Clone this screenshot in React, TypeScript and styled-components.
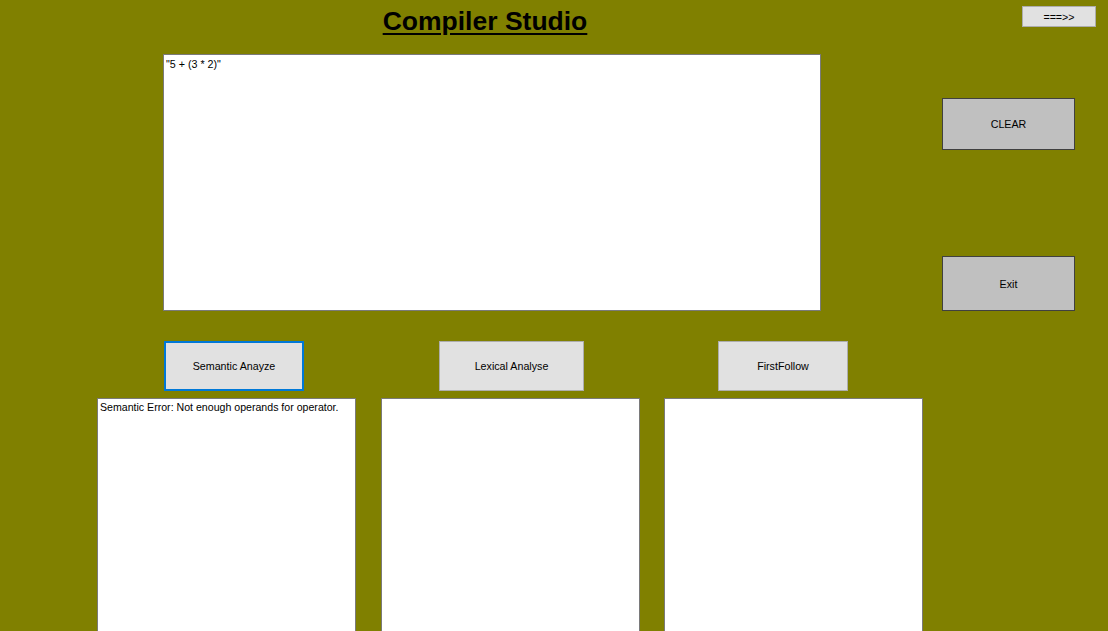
import React, { useState } from 'react';
import styled, { createGlobalStyle } from 'styled-components';

const GlobalStyle = createGlobalStyle`
  html, body {
    margin: 0;
    padding: 0;
    background: #808000;
  }
  * {
    box-sizing: border-box;
  }
`;

const Form = styled.div`
  width: 1108px;
  height: 631px;
  overflow: hidden;
  background: #808000;
  font-family: 'Liberation Sans', Arial, sans-serif;
  font-size: 11px;
  color: #000;
  display: flex;
  flex-direction: column;
  & > * {
    flex-shrink: 0;
  }
`;

const TitleBar = styled.div`
  height: 54px;
  display: flex;
  align-items: flex-start;
`;

const Title = styled.h1`
  margin: 0;
  width: 821px;
  padding: 5px 14px 0 163px;
  text-align: center;
  font-size: 26.5px;
  font-weight: bold;
  text-decoration: underline;
  text-underline-offset: 3px;
  line-height: 32px;
`;

const Spacer = styled.div`
  flex: 1;
`;

const Button = styled.button<{ $w: number; $h: number; $variant?: 'grey' | 'focus' }>`
  width: ${(p) => p.$w}px;
  height: ${(p) => p.$h}px;
  padding: 0;
  margin: 0;
  font-family: 'Liberation Sans', Arial, sans-serif;
  font-size: 10.7px;
  color: #000;
  cursor: pointer;
  background: ${(p) => (p.$variant === 'grey' ? '#c0c0c0' : '#e1e1e1')};
  border: ${(p) =>
    p.$variant === 'grey'
      ? '1px solid #404040'
      : p.$variant === 'focus'
      ? '2px solid #0078d7'
      : '1px solid #adadad'};
  &:hover {
    background: ${(p) => (p.$variant === 'grey' ? '#c8c8c8' : '#e5f1fb')};
  }
`;

const ToggleButton = styled(Button)`
  margin: 6px 12px 0 0;
`;

const EditorRow = styled.div`
  display: flex;
  padding-left: 163px;
`;

const Editor = styled.textarea`
  width: 658px;
  height: 257px;
  margin: 0;
  padding: 3px 2px;
  resize: none;
  border: 1px solid #7a7a7a;
  background: #fff;
  font-family: 'Liberation Sans', Arial, sans-serif;
  font-size: 10.7px;
  line-height: 13px;
  color: #000;
  outline: none;
`;

const SideColumn = styled.div`
  display: flex;
  flex-direction: column;
  margin-left: 121px;
  padding-top: 44px;
  gap: 106px;
`;

const ActionRow = styled.div`
  display: flex;
  margin-top: 30px;
  padding-left: 164px;
`;

const ActionSlot = styled.div<{ $gap: number }>`
  margin-left: ${(p) => p.$gap}px;
`;

const OutputRow = styled.div`
  display: flex;
  margin-top: 7px;
  padding-left: 97px;
`;

const Output = styled.div<{ $gap?: number }>`
  width: 259px;
  height: 260px;
  margin-left: ${(p) => p.$gap ?? 0}px;
  background: #fff;
  border: 1px solid #7a7a7a;
  padding: 2px 2px;
  font-size: 10.6px;
  line-height: 13px;
  white-space: pre-wrap;
`;

export default function App() {
  const [source, setSource] = useState('"5 + (3 * 2)"');
  const [semantic, setSemantic] = useState('Semantic Error: Not enough operands for operator.');
  const [lexical, setLexical] = useState('');
  const [first, setFirst] = useState('');

  const clearAll = () => {
    setSource('');
    setSemantic('');
    setLexical('');
    setFirst('');
  };

  return (
    <>
      <GlobalStyle />
      <Form>
        <TitleBar>
          <Title>Compiler Studio</Title>
          <Spacer />
          <ToggleButton $w={74} $h={21}>===&gt;&gt;</ToggleButton>
        </TitleBar>
        <EditorRow>
          <Editor value={source} onChange={(e) => setSource(e.target.value)} spellCheck={false} />
          <SideColumn>
            <Button $w={133} $h={52} $variant="grey" onClick={clearAll}>
              CLEAR
            </Button>
            <Button $w={133} $h={55} $variant="grey">
              Exit
            </Button>
          </SideColumn>
        </EditorRow>
        <ActionRow>
          <Button $w={140} $h={50} $variant="focus">
            Semantic Anayze
          </Button>
          <ActionSlot $gap={135}>
            <Button $w={145} $h={50}>Lexical Analyse</Button>
          </ActionSlot>
          <ActionSlot $gap={134}>
            <Button $w={130} $h={50}>FirstFollow</Button>
          </ActionSlot>
        </ActionRow>
        <OutputRow>
          <Output>{semantic}</Output>
          <Output $gap={25}>{lexical}</Output>
          <Output $gap={24}>{first}</Output>
        </OutputRow>
      </Form>
    </>
  );
}
